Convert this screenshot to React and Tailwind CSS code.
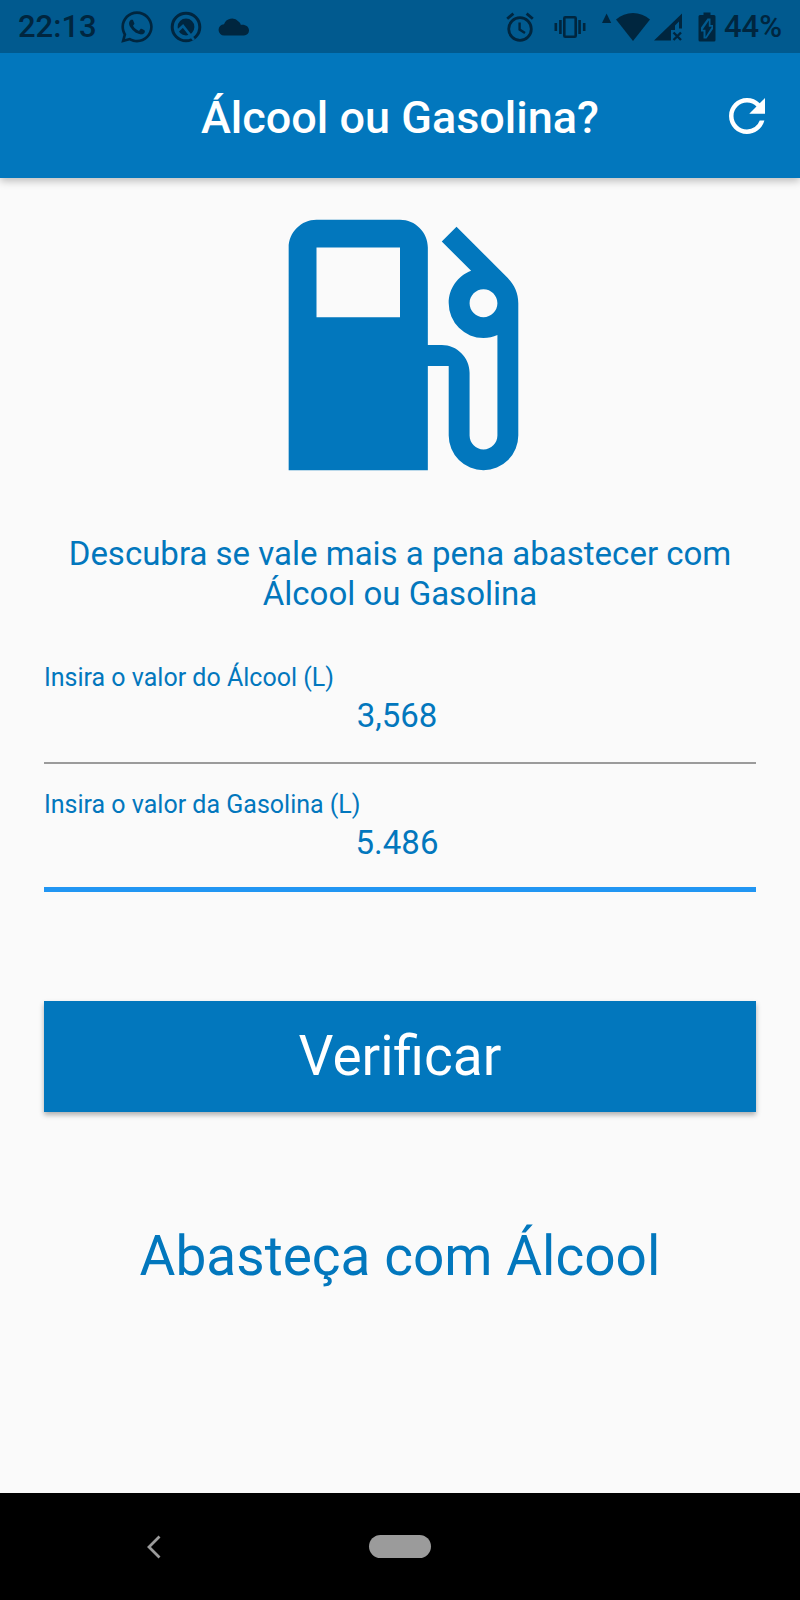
import { useState } from "react";
import { FaWhatsapp } from "react-icons/fa";
import { MdLocalGasStation, MdRefresh } from "react-icons/md";

function SearchRingIcon() {
  return (
    <svg viewBox="0 0 32 32" className="size-8" fill="none" aria-hidden="true">
      <circle cx="16" cy="16" r="13.8" stroke="currentColor" strokeWidth="3" />
      <circle cx="16" cy="16" r="8.4" fill="currentColor" />
      <path d="M7 20.500L13 15L24 29" stroke="#015a8f" strokeWidth="2.6" />
    </svg>
  );
}

function CloudIcon() {
  return (
    <svg viewBox="0 0 32 18" className="h-[18px] w-8" fill="currentColor" aria-hidden="true">
      <path d="M6.300 17.500A5.600 5.600 0 0 1 6 6.300 8.500 8.500 0 0 1 20.500 3.500c1.300 1.200 2 2 2.400 3.400C28 6.500 31 9 31 12.500a5 5 0 0 1-5 5z" />
    </svg>
  );
}

function AlarmIcon() {
  return (
    <svg viewBox="0 0 28 30" className="h-[30px] w-7" fill="none" stroke="currentColor" aria-hidden="true">
      <circle cx="14" cy="17" r="11.3" strokeWidth="2.8" />
      <path d="M1.2 6.8L7.4 1.6M26.8 6.8L20.6 1.6" strokeWidth="2.8" />
      <path d="M13.6 10.5v7l5.4 3.6" strokeWidth="2.4" />
    </svg>
  );
}

function VibrateIcon() {
  return (
    <svg viewBox="0 0 32 24" className="h-6 w-8" fill="none" stroke="currentColor" strokeWidth="2.6" aria-hidden="true">
      <rect x="10.3" y="2.3" width="11.4" height="19.4" rx="1" />
      <path d="M6.4 5v14M1.8 8v8M25.6 5v14M30.2 8v8" />
    </svg>
  );
}

function WifiIcon() {
  return (
    <svg viewBox="0 0 48 30" className="h-[30px] w-12" fill="currentColor" aria-hidden="true">
      <path d="M0 11L4.6 1.5 9.2 11z" />
      <path d="M14 7.4a26 26 0 0 1 34 0L31 29z" />
    </svg>
  );
}

function SignalIcon() {
  return (
    <svg viewBox="0 0 28 28" className="size-7" aria-hidden="true">
      <path d="M0 27.500L28 .5v15h-3V8.500l-4 4v4.500h-4v10.500z" fill="currentColor" />
      <path d="M19.5 19.5l7.5 7.5M27 19.5L19.5 27" stroke="currentColor" strokeWidth="2.4" />
    </svg>
  );
}

function BatteryIcon() {
  return (
    <svg viewBox="0 0 18 30" className="h-[30px] w-[18px]" fill="currentColor" aria-hidden="true">
      <path
        fillRule="evenodd"
        d="M5.500 .5h7V3H16a1.500 1.500 0 0 1 1.500 1.500V28a1.500 1.500 0 0 1-1.500 1.500H2A1.500 1.500 0 0 1 .5 28V4.500A1.500 1.500 0 0 1 2 3h3.500zM9.500 6.500L3 15.500V19.500H5.500V26.500H8.500L15 17V13H12.500V6.500z"
      />
      <path d="M10.800 8.500v6.300h3L7.500 25v-7.300H4.600z" />
    </svg>
  );
}

function StatusBar() {
  return (
    <div className="flex h-[53px] items-center bg-[#015a8f] px-[18px] text-[31px] font-medium leading-none text-[#00263f]">
      <span>22:13</span>
      <FaWhatsapp className="ml-[22px] size-9" aria-hidden="true" />
      <div className="ml-[15px] flex items-center gap-4">
        <SearchRingIcon />
        <CloudIcon />
      </div>
      <div className="ml-auto flex items-center">
        <AlarmIcon />
        <div className="ml-5 mr-4 flex"><VibrateIcon /></div>
        <WifiIcon />
        <div className="ml-1 mr-4 flex"><SignalIcon /></div>
        <BatteryIcon />
        <span className="ml-2">44%</span>
      </div>
    </div>
  );
}

function PriceField({ id, label, value, onChange, lineClass }) {
  return (
    <div className={"flex flex-col " + lineClass}>
      <label htmlFor={id} className="text-[25px] leading-7">{label}</label>
      <input
        id={id}
        type="text"
        inputMode="decimal"
        value={value}
        onChange={(e) => onChange(e.target.value)}
        className="mt-1 h-10 w-full bg-transparent pr-1.5 text-center text-[33px] leading-10 outline-none"
      />
    </div>
  );
}

const toNumber = (text) => parseFloat(text.replace(",", "."));

export default function App() {
  const [alcohol, setAlcohol] = useState("3,568");
  const [gasoline, setGasoline] = useState("5.486");
  const [result, setResult] = useState("Abasteça com Álcool");

  const check = () => {
    const ratio = toNumber(alcohol) / toNumber(gasoline);
    setResult(ratio < 0.7 ? "Abasteça com Álcool" : "Abasteça com Gasolina");
  };

  const reset = () => {
    setAlcohol("");
    setGasoline("");
    setResult("");
  };

  return (
    <div className="flex min-h-screen flex-col bg-[#fafafa] font-[Roboto,sans-serif] text-[#0277bd]">
      <header className="bg-[#0277bd] shadow-[0_3px_8px_rgba(0,0,0,0.25)]">
        <StatusBar />
        <div className="grid h-[125px] grid-cols-[1fr_auto_1fr] items-center px-[26px] text-white">
          <h1 className="col-start-2 pt-1 text-[45px] font-medium leading-none">Álcool ou Gasolina?</h1>
          <button type="button" aria-label="Limpar" onClick={reset} className="justify-self-end">
            <MdRefresh className="size-[54px]" />
          </button>
        </div>
      </header>

      <main className="flex flex-1 flex-col px-11">
        <MdLocalGasStation className="size-[334px] self-center" aria-hidden="true" />
        <p className="mt-[22px] text-center text-[33px] leading-10">
          Descubra se vale mais a pena abastecer com Álcool ou Gasolina
        </p>
        <form
          className="mt-[50px] flex flex-col"
          onSubmit={(e) => {
            e.preventDefault();
            check();
          }}
        >
          <PriceField
            id="alcohol"
            label="Insira o valor do Álcool (L)"
            value={alcohol}
            onChange={setAlcohol}
            lineClass="border-b-2 border-[#9b9b9b] pb-[26px]"
          />
          <div className="mt-[27px] flex flex-col">
            <PriceField
              id="gasoline"
              label="Insira o valor da Gasolina (L)"
              value={gasoline}
              onChange={setGasoline}
              lineClass="border-b-5 border-[#2196f3] pb-6"
            />
          </div>
          <button
            type="submit"
            className="mt-[109px] h-[111px] bg-[#0277bd] text-[55px] leading-none text-white shadow-[0_3px_5px_rgba(0,0,0,0.3)]"
          >
            Verificar
          </button>
        </form>
        <output htmlFor="alcohol gasoline" className="mt-28 block min-h-16 text-center text-[55px] leading-[64px]">
          {result}
        </output>
      </main>

      <nav className="grid h-[107px] grid-cols-[1fr_auto_1fr] items-center bg-black text-[#9b9b9b]">
        <button type="button" aria-label="Voltar" className="ml-[146px] justify-self-start">
          <svg viewBox="0 0 16 24" className="h-6 w-4" fill="none" stroke="currentColor" strokeWidth="2.8" aria-hidden="true">
            <path d="M13.500 1.500L3 12l10.500 10.500" />
          </svg>
        </button>
        <button type="button" aria-label="Início" className="h-[23px] w-[62px] rounded-full bg-[#9b9b9b]" />
      </nav>
    </div>
  );
}
